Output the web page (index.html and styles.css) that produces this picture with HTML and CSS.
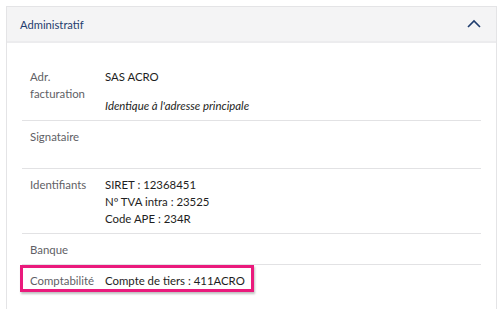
FILE: index.html
```html
<!DOCTYPE html>
<html lang="fr">
<head>
<meta charset="utf-8">
<link rel="stylesheet" href="styles.css">
</head>
<body>
<div class="card">
  <div class="card-header">
    <span class="title">Administratif</span>
    <svg class="chevron" width="14" height="9" viewBox="0 0 14 9"><path d="M1 8 L7 2 L13 8" fill="none" stroke="#1f3d6e" stroke-width="1.6"/></svg>
  </div>
  <div class="card-body">
    <div class="row first">
      <div class="label">Adr.<br>facturation</div>
      <div class="value">
        <div>SAS ACRO</div>
        <div class="note">Identique à l'adresse principale</div>
      </div>
    </div>
    <div class="row">
      <div class="label">Signataire</div>
      <div class="value"><div class="blank"></div></div>
    </div>
    <div class="row">
      <div class="label">Identifiants</div>
      <div class="value">
        <div>SIRET : 12368451</div>
        <div>Nº TVA intra : 23525</div>
        <div>Code APE : 234R</div>
      </div>
    </div>
    <div class="row">
      <div class="label">Banque</div>
      <div class="value"></div>
    </div>
    <div class="row last">
      <div class="label">Comptabilité</div>
      <div class="value">Compte de tiers : 411ACRO</div>
      <div class="highlight"></div>
    </div>
  </div>
</div>
</body>
</html>
```
FILE: styles.css
```css
html, body {
  margin: 0;
  padding: 0;
  background: #ffffff;
}
body {
  font-family: Lato, "Liberation Sans", sans-serif;
  font-size: 11.4px;
  color: #222222;
}
.card {
  margin: 6px 0 0 6px;
  border: 1px solid #e4e4e6;
  height: 310px;
  box-sizing: border-box;
}
.card-header {
  height: 34px;
  background: #f4f4f5;
  border-bottom: 2px solid #ececee;
  display: flex;
  align-items: center;
  justify-content: space-between;
  padding: 0 15px 0 13px;
}
.title {
  color: #1f3d6e;
  font-size: 11.2px;
}
.chevron {
  display: block;
  margin-top: -1px;
}
.card-body {
  padding: 25px 15px 0 15px;
}
.row {
  display: flex;
  border-bottom: 1px solid #e2e2e4;
  padding: 7px 0 6px 8px;
  line-height: 17px;
  position: relative;
}
.row.first {
  padding-top: 0;
}
.row.last {
  border-bottom: none;
}
.label {
  width: 75px;
  color: #5f5f66;
  flex: none;
}
.value {
  color: #1e1e22;
}
.note {
  font-style: italic;
  margin-top: 12px;
}
.blank {
  height: 34px;
}
.highlight {
  position: absolute;
  left: -2px;
  top: 0;
  width: 234px;
  height: 27px;
  box-sizing: border-box;
  border: 3px solid #ea1a7c;
  box-shadow: 1px 2px 2px rgba(0,0,0,0.25);
}
```
